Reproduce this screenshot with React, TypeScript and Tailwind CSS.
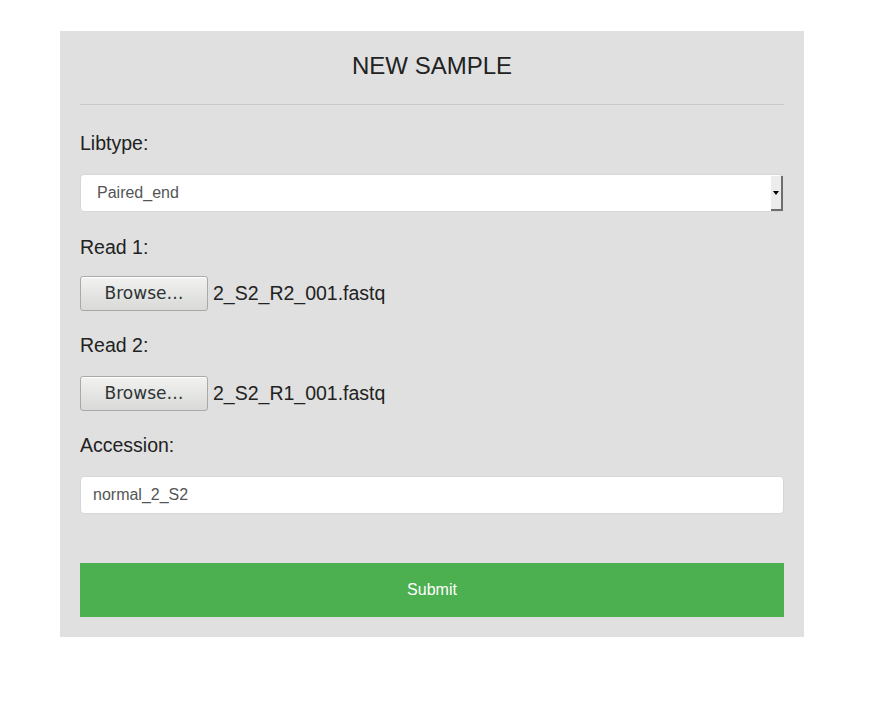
import React from "react";

function FileRow({ name }: { name: string }) {
  return (
    <div className="flex items-center h-[35px]">
      <div
        className="w-[128px] h-[35px] rounded-[3px] border border-[#a9a9a9] bg-gradient-to-b from-[#f2f2f1] to-[#d9d9d7] flex items-center justify-center text-[17px] text-[#2e3436] shadow-[inset_0_1px_0_#ffffff]"
        style={{ fontFamily: '"DejaVu Sans", sans-serif' }}
      >
        Browse…
      </div>
      <span className="ml-[5px] text-[19.5px] text-[#222]">{name}</span>
    </div>
  );
}

export default function App() {
  return (
    <div
      className="w-[885px] h-[709px] bg-white pt-[31px] pl-[60px]"
      style={{ fontFamily: '"Liberation Sans", Arial, sans-serif' }}
    >
      <div className="w-[744px] h-[606px] bg-[#dfe0df] px-[20px] flex flex-col">
        <div className="h-[74px] border-b border-[#c9c9c9] flex items-center justify-center pb-[3px]">
          <h1 className="text-[24px] text-[#222] leading-none">NEW SAMPLE</h1>
        </div>
        <div className="mt-[29px] text-[19.5px] text-[#222] leading-none h-[22px]">Libtype:</div>
        <div className="mt-[18px] h-[38px] w-[703px] bg-white rounded-[4px] border border-[#d4d6da] flex items-center relative">
          <span className="ml-[16px] text-[16px] text-[#555]">Paired_end</span>
          <div className="absolute right-[-1px] top-[1px] w-[12px] h-[35px] bg-[#ececec] border-r-2 border-b-2 border-[#6e6e6e] flex items-center justify-center">
            <svg width="6" height="4" viewBox="0 0 6 4">
              <path d="M0 0 L6 0 L3 4 Z" fill="#000" />
            </svg>
          </div>
        </div>
        <div className="mt-[26px] text-[19.5px] text-[#222] leading-none h-[22px]">Read 1:</div>
        <div className="mt-[16px]">
          <FileRow name="2_S2_R2_001.fastq" />
        </div>
        <div className="mt-[25px] text-[19.5px] text-[#222] leading-none h-[22px]">Read 2:</div>
        <div className="mt-[18px]">
          <FileRow name="2_S2_R1_001.fastq" />
        </div>
        <div className="mt-[25px] text-[19.5px] text-[#222] leading-none h-[22px]">Accession:</div>
        <div className="mt-[18px] h-[38px] bg-white rounded-[4px] border border-[#d4d6da] flex items-center">
          <span className="ml-[12px] text-[16px] text-[#555]">normal_2_S2</span>
        </div>
        <div className="mt-[49px] h-[54px] bg-[#4caf50] flex items-center justify-center text-white text-[16px]">
          Submit
        </div>
      </div>
    </div>
  );
}
